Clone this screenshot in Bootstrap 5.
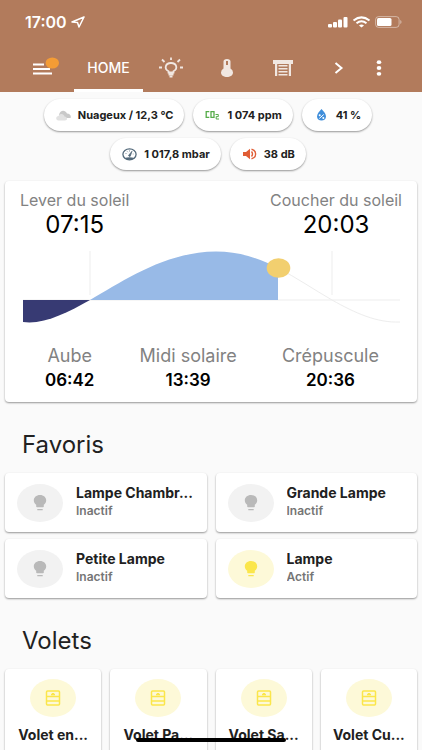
<!DOCTYPE html>
<html lang="fr">
<head>
<meta charset="utf-8">
<meta name="viewport" content="width=device-width, initial-scale=1">
<title>Home</title>
<link href="https://cdn.jsdelivr.net/npm/bootstrap@5.3.0/dist/css/bootstrap.min.css" rel="stylesheet">
<style>
body{font-family:Inter,Roboto,"Liberation Sans",sans-serif;background:#fafafa;color:#212121;font-size:14px;line-height:20px}
svg{display:block;flex-shrink:0}
.app-header{background:#b27b5c;color:#fff}
.status-bar{height:44px;padding:0 20px 0 25px;font-size:16px}
.tab-bar{height:48px;padding:0 31px 0 33px}
.tab-bar button{border:0;background:none;color:#fff;padding:0;height:48px;display:flex;align-items:center;justify-content:center}
.tab-side{width:24px}
.tab-icon{width:56px;opacity:.82}
.tab-bar .tab-home{width:69px;font-size:14px;font-weight:500;border-bottom:3px solid #fff;border-top:3px solid transparent}
.chips{gap:7px 9px;padding:7px 14px 0 8px}
.chip{height:32px;border-radius:16px;background:#fff;box-shadow:0 1px 2px #0006;font-size:11px;font-weight:700;padding:0 11px 0 12px;gap:7px}
.panel{background:#fff;border-radius:4px;box-shadow:0 1px 2px #0006}
.sun-panel{margin:11px 5px 0;padding:9px 0 8px}
.sun-top{padding:0 15px;font-size:16px;color:#828282}
.sun-time{font-size:24px;line-height:30px;color:#000}
.sun-curve{margin-top:6px}
.sun-bottom{padding:18px 38px 0 40px;font-size:18px;color:#828282}
.sun-bottom strong{font-size:17px;line-height:28px;font-weight:600;color:#000}
.section-title{font-size:24px;line-height:32px;font-weight:400;margin:27px 22px 12px}
.tiles{display:grid;gap:7px 9px;padding:0 5px}
.tiles-2{grid-template-columns:repeat(2,minmax(0,1fr))}
.tiles-4{grid-template-columns:repeat(4,minmax(0,1fr))}
.tile{border:0;text-align:left;color:#212121;min-width:0}
.lamp{height:59px;padding:0 12px;gap:13px}
.lamp-text{padding-bottom:3px}
.state{font-size:12px;line-height:16px;font-weight:600;color:#757575}
.label-text{font-weight:700;font-size:14px}
.disc{width:46px;height:38px;border-radius:50%;background:#f2f2f2;color:#b9b9b9;flex-shrink:0}
.disc-on{background:#fdf9d8;color:#fbe64b}
.shutter{padding:10px 8px 24px;gap:8px}
.home-line{left:50%;bottom:8px;transform:translateX(-50%);width:150px;height:4px;border-radius:2px;background:#000}
</style>
<script src="https://cdn.jsdelivr.net/npm/bootstrap@5.3.0/dist/js/bootstrap.bundle.min.js"></script>
</head>
<body>
<svg width="0" height="0" class="position-absolute" aria-hidden="true">
<symbol id="bulb" viewBox="0 0 14 16" preserveAspectRatio="none"><path fill="currentColor" d="M7 0C3.3 0 0.8 2.4 0.8 5.5 0.8 7.5 1.9 8.8 3.2 9.7V11.5Q3.2 12.2 4 12.2H10Q10.8 12.2 10.8 11.5V9.7C12.1 8.8 13.2 7.5 13.2 5.5 13.2 2.4 10.7 0 7 0ZM4.3 14H9.7V15.2H4.3Z"/></symbol>
<symbol id="blind" viewBox="0 0 16 16" preserveAspectRatio="none"><g fill="none" stroke="currentColor" stroke-width="1.5"><rect x="1.5" y="1" width="13" height="14" rx="1"/><path d="M1.5 6.5H14.5M1.5 11H14.5M6 4.5H10M7 3.8H9"/></g></symbol>
</svg>
<div class="vh-100 overflow-hidden position-relative">
<header class="app-header">
  <div class="status-bar d-flex align-items-center justify-content-between">
    <div class="d-flex align-items-center gap-1 fw-semibold"><span>17:00</span>
      <svg width="14" height="12" viewBox="0 0 14 12" fill="none" stroke="#fff" stroke-width="1.5" stroke-linejoin="round"><path d="M13 1 1 6 6.5 6.5 8 11Z"/></svg></div>
    <div class="d-flex align-items-center gap-1">
      <svg width="20" height="12" viewBox="0 0 20 12" fill="#fff"><rect y="8" width="4" height="3.5" rx="1"/><rect x="5" y="6" width="4" height="5.5" rx="1"/><rect x="10" y="3.5" width="4" height="8" rx="1"/><rect x="15.5" y="1" width="4" height="10.5" rx="1"/></svg>
      <svg width="19" height="12" viewBox="0 0 19 12" fill="none" stroke="#fff" stroke-width="2"><path d="M1.5 4.5Q9.5-1.8 17.5 4.5M4.5 7.3Q9.5 3.3 14.5 7.3"/><path d="M7 9.4Q9.5 7.6 12 9.4L9.5 11.5Z" fill="#fff" stroke="none"/></svg>
      <svg width="27" height="12" viewBox="0 0 27 12"><rect x=".6" y=".6" width="23.5" height="10.8" rx="3" fill="none" stroke="#fff" stroke-opacity=".45"/><rect x="2" y="2" width="14.5" height="8" rx="1.5" fill="#fff"/><path d="M25.3 4V8Q26.5 7.5 26.5 6T25.3 4Z" fill="#fff" opacity=".5"/></svg>
    </div>
  </div>
  <nav class="tab-bar d-flex align-items-center" aria-label="Vues">
    <button class="tab-side" aria-label="Menu"><svg width="28" height="22" viewBox="0 0 28 22"><path d="M2 7.5H13M2 12H19M2 16.5H21" stroke="#fff" stroke-width="1.8"/><ellipse cx="21.3" cy="6" rx="6.7" ry="5.6" fill="#f49c35"/></svg></button>
    <button class="tab-home ms-auto">HOME</button>
    <button class="tab-icon" aria-label="Lumières"><svg width="26" height="22" viewBox="0 0 26 22" fill="none" stroke="#fff" stroke-width="1.8"><path d="M10.5 15.5V14.3C6 12 7 6 13 6S20 12 15.5 14.3V15.5ZM10.5 17.5H15.5M11.5 19.7H14.5M1 10.5H4M22 10.5H25M4 2.5 6.5 5M22 2.5 19.5 5M13 .5V3"/></svg></button>
    <button class="tab-icon" aria-label="Température"><svg width="14" height="20" viewBox="0 0 14 20"><path fill="#fff" fill-rule="evenodd" d="M3.5 3.5Q3.5 1 7 1T10.5 3.5V10.5Q13 12 13 14.5C13 17.5 10 19 7 19S1 17.5 1 14.5Q1 12 3.5 10.5ZM6 3V7H8V3Z"/></svg></button>
    <button class="tab-icon" aria-label="Volets"><svg width="20" height="16" viewBox="0 0 20 16"><path fill="#fff" d="M0 0H20V4H18V16H15.8V4H4.2V16H2V4H0ZM5.5 5H14.5V6.5H5.5ZM5.5 8H14.5V9.5H5.5ZM5.5 11H14.5V12.5H5.5ZM5.5 14H14.5V15.5H5.5Z"/></svg></button>
    <button class="tab-icon opacity-100" aria-label="Suivant"><svg width="10" height="12" viewBox="0 0 10 12"><path d="M1.5 1 7.5 6 1.5 11" fill="none" stroke="#fff" stroke-width="2"/></svg></button>
    <button class="tab-side" aria-label="Options"><svg width="6" height="16" viewBox="0 0 6 16" fill="#fff"><ellipse cx="3" cy="2.2" rx="2.3" ry="1.9"/><ellipse cx="3" cy="8" rx="2.3" ry="1.9"/><ellipse cx="3" cy="13.8" rx="2.3" ry="1.9"/></svg></button>
  </nav>
</header>
<main>
  <div class="chips d-flex flex-wrap justify-content-center">
    <div class="chip d-flex align-items-center"><svg width="15" height="11" viewBox="0 0 15 11"><path d="M3 5C4 0 9-.5 11 3.5 14 3.5 15.5 6 14.5 8H10Z" fill="#c9c9c9"/><path d="M2.5 10.5C-.8 10-.3 6 2.5 6 4 3 8 3.5 8.5 6.5 11.5 6.5 12 10.5 9 10.5Z" fill="#e2e2e2"/></svg><span>Nuageux / 12,3 °C</span></div>
    <div class="chip d-flex align-items-center"><svg width="15" height="10" viewBox="0 0 15 10" fill="none" stroke="#55ac48" stroke-width="1.3"><path d="M4.3 1.7H1.2V7.3H4.3M6 1.7H9V7.3H6Z"/><path d="M10.5 4.5H13.3V6.6H11.2V9H14" stroke-width="1"/></svg><span>1 074 ppm</span></div>
    <div class="chip d-flex align-items-center"><svg width="15" height="12" viewBox="0 0 15 12"><path d="M7.5 0C5 2.5 3 5 3 7.5 3 10 5 11.5 7.5 11.5S12 10 12 7.5C12 5 10 2.5 7.5 0Z" fill="#3f8edb"/><path d="M5.3 9.5 9.7 5.5" stroke="#fff"/><circle cx="5.7" cy="6.3" r="1" fill="#fff"/><circle cx="9.3" cy="8.9" r="1" fill="#fff"/></svg><span>41 %</span></div>
    <div class="chip d-flex align-items-center"><svg width="15" height="13" viewBox="0 0 15 13"><ellipse cx="7.5" cy="6.3" rx="6.6" ry="5.5" fill="none" stroke="#53697a" stroke-width="1.3"/><path d="M2.5 10Q7.5 8.5 12.5 10 7.5 13.5 2.5 10Z" fill="#53697a"/><path d="M6.5 7.5 10 3.2 8.3 8.2Q7 8.8 6.5 7.5M3.5 5.5H4.5M5.2 3.4 5.9 4.2M7.5 2.4V3.5M10.8 6H11.5" fill="#53697a" stroke="#53697a" stroke-width=".7"/></svg><span>1 017,8 mbar</span></div>
    <div class="chip d-flex align-items-center"><svg width="15" height="12" viewBox="0 0 15 12"><path d="M1 4H4L8 .8V11.2L4 8H1Z" fill="#e05d35"/><path d="M9.5 3.5Q11.5 6 9.5 8.5M9.5 1.2C15 2.5 15 9.5 9.5 10.8" fill="none" stroke="#e05d35" stroke-width="1.4"/></svg><span>38 dB</span></div>
  </div>
  <section class="panel sun-panel">
    <div class="sun-top d-flex justify-content-between text-center">
      <div>Lever du soleil<div class="sun-time">07:15</div></div>
      <div>Coucher du soleil<div class="sun-time">20:03</div></div>
    </div>
    <svg class="w-100 sun-curve" viewBox="0 0 412 82" role="img" aria-label="Course du soleil">
      <path d="M85 5V49M327 5V49M18 54H395" stroke="#ededed"/>
      <path d="M273 22C292 32 308 43 327 54 350 67 372 77 395 76" fill="none" stroke="#ededed"/>
      <path d="M18 54V76C38 79 62 67 85 54Z" fill="#373a73"/>
      <path d="M85 54C120 34 160 6 211 5.5 235 5.5 256 13 273 22V54Z" fill="#98bae7"/>
      <ellipse cx="273.5" cy="22" rx="11.8" ry="9.8" fill="#f2cf6f"/>
    </svg>
    <div class="sun-bottom d-flex justify-content-between text-center">
      <div>Aube<strong class="d-block">06:42</strong></div>
      <div>Midi solaire<strong class="d-block">13:39</strong></div>
      <div>Crépuscule<strong class="d-block">20:36</strong></div>
    </div>
  </section>
  <h2 class="section-title">Favoris</h2>
  <div class="tiles tiles-2">
    <button class="panel tile lamp d-flex align-items-center"><span class="disc d-flex align-items-center justify-content-center"><svg width="14" height="16"><use href="#bulb"/></svg></span><span class="lamp-text d-block text-truncate"><span class="label-text">Lampe Chambr...</span><span class="state d-block">Inactif</span></span></button>
    <button class="panel tile lamp d-flex align-items-center"><span class="disc d-flex align-items-center justify-content-center"><svg width="14" height="16"><use href="#bulb"/></svg></span><span class="lamp-text d-block text-truncate"><span class="label-text">Grande Lampe</span><span class="state d-block">Inactif</span></span></button>
    <button class="panel tile lamp d-flex align-items-center"><span class="disc d-flex align-items-center justify-content-center"><svg width="14" height="16"><use href="#bulb"/></svg></span><span class="lamp-text d-block text-truncate"><span class="label-text">Petite Lampe</span><span class="state d-block">Inactif</span></span></button>
    <button class="panel tile lamp d-flex align-items-center"><span class="disc disc-on d-flex align-items-center justify-content-center"><svg width="14" height="16"><use href="#bulb"/></svg></span><span class="lamp-text d-block text-truncate"><span class="label-text">Lampe</span><span class="state d-block">Actif</span></span></button>
  </div>
  <h2 class="section-title">Volets</h2>
  <div class="tiles tiles-4">
    <button class="panel tile shutter d-flex flex-column align-items-center"><span class="disc disc-on d-flex align-items-center justify-content-center"><svg width="16" height="16"><use href="#blind"/></svg></span><span class="label-text text-nowrap">Volet en...</span></button>
    <button class="panel tile shutter d-flex flex-column align-items-center"><span class="disc disc-on d-flex align-items-center justify-content-center"><svg width="16" height="16"><use href="#blind"/></svg></span><span class="label-text text-nowrap">Volet Pa...</span></button>
    <button class="panel tile shutter d-flex flex-column align-items-center"><span class="disc disc-on d-flex align-items-center justify-content-center"><svg width="16" height="16"><use href="#blind"/></svg></span><span class="label-text text-nowrap">Volet Sa...</span></button>
    <button class="panel tile shutter d-flex flex-column align-items-center"><span class="disc disc-on d-flex align-items-center justify-content-center"><svg width="16" height="16"><use href="#blind"/></svg></span><span class="label-text text-nowrap">Volet Cu...</span></button>
  </div>
</main>
<div class="home-line position-absolute"></div>
</div>
</body>
</html>
